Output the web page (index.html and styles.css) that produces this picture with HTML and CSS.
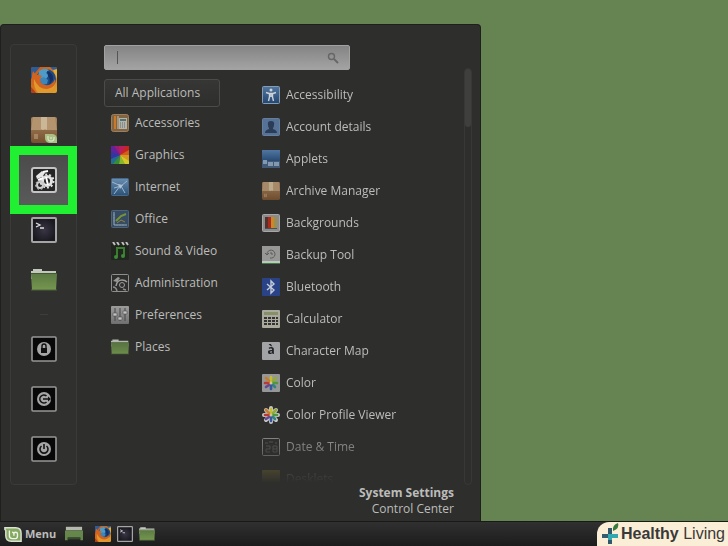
FILE: index.html
```html
<!DOCTYPE html>
<html lang="en">
<head>
<meta charset="utf-8">
<title>Menu</title>
<meta name="viewport" content="width=device-width, initial-scale=1">
<link rel="stylesheet" href="styles.css">
</head>
<body>
<svg class="sprite" aria-hidden="true">
  <defs>
    <linearGradient id="g-grey" x2="0" y2="1"><stop stop-color="#a9a9a9"/><stop offset="1" stop-color="#777"/></linearGradient>
    <linearGradient id="g-blue" x2="0" y2="1"><stop stop-color="#557fae"/><stop offset="1" stop-color="#244a78"/></linearGradient>
    <linearGradient id="g-sky" x2="0" y2="1"><stop stop-color="#6f98bf"/><stop offset="1" stop-color="#2c5580"/></linearGradient>
    <linearGradient id="g-green" x2="0" y2="1"><stop stop-color="#5c7b44"/><stop offset="1" stop-color="#75974f"/></linearGradient>
    <linearGradient id="g-box" x2="0" y2="1"><stop stop-color="#a98660"/><stop offset="1" stop-color="#76502f"/></linearGradient>
    <linearGradient id="g-fox" x2="1" y2="1"><stop stop-color="#c8541b"/><stop offset=".6" stop-color="#d9781c"/><stop offset="1" stop-color="#e0a531"/></linearGradient>
    <radialGradient id="g-term"><stop stop-color="#3a3645"/><stop offset="1" stop-color="#1a1920"/></radialGradient>
  </defs>
  <symbol id="firefox" viewBox="0 0 26 26">
    <rect width="26" height="26" rx="2" fill="url(#g-fox)"/>
    <path d="M0 2Q0 0 2 0h7L4 6 0 12zM19 0h5q2 0 2 2v5z" fill="#2d5c96"/>
    <path d="M22 3l4-1v10z" fill="#e3b13a"/>
    <circle cx="15" cy="12" r="10" fill="#1d4c86"/>
    <path d="M8 4q5-4 10-1l-3 3 3 2-3 4-5 1-3-3z" fill="#4e9bc8"/>
    <path d="M8 12l5-2 4 3-1 4-5 1z" fill="#3c86bb"/>
    <path d="M16 4q7 2 6 9l-4 5q2-6-1-9z" fill="#132f63"/>
    <path d="M2 4l3 4q3-1 6 1l-2 3 1 4q5 4 10 1 3-2 4-5 1 7-5 11-9 4-15-3-5-7-2-16z" fill="#d36420"/>
    <path d="M3 12q4 10 13 10 6-1 8-5-1 8-8 9H7Q2 20 3 12z" fill="#e39a2d"/>
    <path d="M0 20q3 3 5 6H2q-2 0-2-2z" fill="#b33d19"/>
  </symbol>
  <symbol id="box" viewBox="0 0 26 26">
    <rect width="26" height="26" rx="2" fill="url(#g-box)"/>
    <path d="M2 0h22l2 13H0z" fill="#b3946f"/>
    <path d="M0 13h26v1H0z" fill="#8c6b49"/>
    <path d="M10 0h6v13l-2-1-2 1-2-1z" fill="#cbb798"/>
    <path d="M4 17v5M6 17v5" stroke="#c4ab87"/>
  </symbol>
  <symbol id="package" viewBox="0 0 26 26">
    <use href="#box"/>
    <path d="M14 17h8q4 1 4 5v4h-8q-4-1-4-5z" fill="#a9bf83"/>
    <path d="M17 19v3q0 2 2 2h2q2 0 2-2v-2M20 20v2" fill="none" stroke="#e6efd8"/>
  </symbol>
  <symbol id="gears" viewBox="0 0 26 26">
    <rect x="1" y="1" width="24" height="24" rx="2" fill="#252525" stroke="#c4c4c4" stroke-width="2"/>
    <path d="M5 9l6-5 3 2-3 4-5 2z" fill="#e6e6e6"/>
    <circle cx="16" cy="14" r="4.500" fill="none" stroke="#e2e2e2" stroke-width="3"/>
    <circle cx="16" cy="14" r="6.500" fill="none" stroke="#e2e2e2" stroke-width="2" stroke-dasharray="2 2"/>
    <circle cx="9" cy="18" r="3" fill="none" stroke="#ccc" stroke-width="2"/>
    <circle cx="9" cy="18" r="4.500" fill="none" stroke="#bbb" stroke-dasharray="2 2"/>
    <path d="M12 5l5-1M7 13l5-2M15 10l2 8" stroke="#fff" stroke-width="2"/>
  </symbol>
  <symbol id="terminal" viewBox="0 0 26 26">
    <rect x="1" y="1" width="24" height="24" rx="1" fill="url(#g-term)" stroke="#a5a5a5" stroke-width="2"/>
    <path d="M5 6l4 2-4 2M9 11h4" fill="none" stroke="#e0e0e0" stroke-width="1.3"/>
  </symbol>
  <symbol id="folder" viewBox="0 0 26 22">
    <path d="M0 2h2V0h9v2h14v8H0z" fill="#c3c8be"/>
    <path d="M0 4h26v1H0z" fill="#435a33"/>
    <path d="M0 5h26l-1 16H1z" fill="url(#g-green)"/>
    <path d="M0 21h26" stroke="#4c6637"/>
  </symbol>
  <symbol id="session" viewBox="0 0 26 26">
    <rect x="1" y="1" width="24" height="24" rx="1" fill="#080808" stroke="#979797" stroke-width="1.6"/>
    <circle cx="13" cy="13" r="7" fill="#a6a6a6"/>
  </symbol>
  <symbol id="lock" viewBox="0 0 26 26"><use href="#session"/><path d="M10 12h6v5h-6z" fill="#111"/><path d="M11 12v-2q0-2 2-2t2 2v2" fill="none" stroke="#111" stroke-width="1.4"/></symbol>
  <symbol id="logout" viewBox="0 0 26 26"><use href="#session"/><path d="M15.500 10a4 4 0 1 0 0 6M12 13h6" fill="none" stroke="#151515" stroke-width="1.6"/><path d="M17 10.500l3 2.500-3 2.500z" fill="#151515"/></symbol>
  <symbol id="power" viewBox="0 0 26 26"><use href="#session"/><path d="M10.500 10a4 4 0 1 0 5 0M13 8v5" fill="none" stroke="#151515" stroke-width="1.6"/></symbol>

  <symbol id="accessories" viewBox="0 0 18 18">
    <rect x=".5" y=".5" width="17" height="17" rx="2" fill="#8d6a45" stroke="#a98961"/>
    <path d="M4 2v13" stroke="#d98326" stroke-width="2"/><path d="M7 2v13" stroke="#ddd3bf"/>
    <rect x="8" y="4" width="8" height="11" fill="#bfc3bd"/><path d="M9 5h6v2H9z" fill="#5b7a72"/>
    <path d="M9 9h6M9 11h6M9 13h6" stroke="#6c6f6b" stroke-dasharray="1 1"/>
  </symbol>
  <symbol id="graphics" viewBox="0 0 18 18">
    <rect width="18" height="18" rx="1" fill="#a51c7c"/>
    <path d="M9 9L8 0h8z" fill="#c91f61"/><path d="M9 9l6-9h3v5z" fill="#d8251e"/><path d="M9 9l9-5v5z" fill="#e5641a"/>
    <path d="M9 9h9v7z" fill="#eaa21c"/><path d="M9 9l9 6v3h-5z" fill="#e6d928"/><path d="M9 9l5 9H8z" fill="#8fc72b"/>
    <path d="M9 9l-1 9H1z" fill="#35983a"/><path d="M9 9l-7 9H0v-6z" fill="#23729c"/><path d="M9 9l-9 4V5z" fill="#3238ae"/><path d="M9 9L0 6V0h3z" fill="#6522a8"/>
  </symbol>
  <symbol id="internet" viewBox="0 0 18 18">
    <rect x=".5" y=".5" width="17" height="17" rx="1" fill="url(#g-sky)" stroke="#486f96"/>
    <path d="M1 4l9 4 6-5M9 8l-6 8M10 8l4 7M3 10l7-2" fill="none" stroke="#a9c7df"/>
    <path d="M7 6l5 1-3 4z" fill="#bcd4e7"/>
  </symbol>
  <symbol id="office" viewBox="0 0 18 18">
    <rect x=".5" y=".5" width="17" height="17" rx="1" fill="#36506b" stroke="#506a83"/>
    <path d="M3 2v13h13" fill="none" stroke="#a8bac9"/><path d="M2 5h2M2 8h2M2 11h2M6 14v2M9 14v2M12 14v2" stroke="#8196a8"/>
    <path d="M5 11l5-5 5-2" fill="none" stroke="#7f9e37" stroke-width="2"/><path d="M6 13l4-3 4 2" fill="none" stroke="#a08c35"/>
  </symbol>
  <symbol id="video" viewBox="0 0 18 18">
    <rect y="1" width="18" height="17" rx="1" fill="#1f261c"/>
    <path d="M2 0l2 3M6 0l2 3M11 0l2 3M15 0l2 3" stroke="#d0d0d0" stroke-width="2"/>
    <path d="M6 15V6h7v8" fill="none" stroke="#3d8631" stroke-width="2"/><circle cx="5" cy="15" r="2" fill="#42933a"/><circle cx="12" cy="14" r="2" fill="#42933a"/>
  </symbol>
  <symbol id="admin" viewBox="0 0 18 18">
    <rect x=".5" y=".5" width="17" height="17" rx="1" fill="#2e2e2e" stroke="#999"/>
    <path d="M2 7l5-4 2 1-3 4z" fill="#a5a5a5"/>
    <circle cx="11" cy="11" r="2.500" fill="none" stroke="#aaa"/><path d="M5 12q1-6 6-6 3 0 5 2" fill="none" stroke="#aaa" stroke-width="1.500"/>
    <path d="M2 13q3 0 4 4M12 15l3 1" fill="none" stroke="#999" stroke-width="1.500"/>
  </symbol>
  <symbol id="prefs" viewBox="0 0 18 18">
    <rect width="18" height="18" rx="1" fill="url(#g-grey)"/>
    <path d="M4 2v13M9 2v13M14 2v13" stroke="#4b4b4b"/><path d="M2 7h4v3H2zM7 11h4v3H7zM12 5h4v3h-4z" fill="#d3d3d3" stroke="#565656" stroke-width=".6"/>
  </symbol>
  <symbol id="access" viewBox="0 0 18 18">
    <rect x=".5" y=".5" width="17" height="17" rx="1" fill="url(#g-blue)" stroke="#8fa9c3"/>
    <circle cx="9" cy="4" r="1.500" fill="#e1e6eb"/><path d="M4 6.500l3 1h4l3-1M9 7v4M7.500 8v3l-1 4M10.500 8v3l1 4" fill="none" stroke="#e1e6eb" stroke-width="1.400"/>
  </symbol>
  <symbol id="account" viewBox="0 0 18 18">
    <rect x=".5" y=".5" width="17" height="17" rx="1" fill="#5d7aa3" stroke="#6c87ac"/>
    <path d="M9 3q4 0 3 4 0 2-1 3v1q4 1 4 4H3q0-3 4-4v-1q-1-1-1-3-1-4 3-4z" fill="#2c3f5c"/>
  </symbol>
  <symbol id="applets" viewBox="0 0 18 18">
    <path d="M0 0h18v12H0z" fill="url(#g-blue)"/><path d="M0 11h18v7H0z" fill="#46607f"/>
    <path d="M1 10h4v4H1zM6 12h5v4H6zM12 12h5v4h-5z" fill="#8da3bd"/>
  </symbol>
  <symbol id="backgrounds" viewBox="0 0 18 18">
    <rect x=".5" y=".5" width="17" height="17" rx="1" fill="#969696" stroke="#b5b5b5"/>
    <path d="M3 3h3v11H3z" fill="#5b342b"/><path d="M6 3h3v11H6z" fill="#b72c20"/><path d="M9 3h3v11H9z" fill="#da9529"/><path d="M12 3h3v11h-3z" fill="#a8995a"/><path d="M3 14h12v1H3z" fill="#555"/>
  </symbol>
  <symbol id="backup" viewBox="0 0 18 18">
    <rect width="18" height="18" fill="#a3a5a2"/><path d="M0 15h18v2H0z" fill="#d2d5d0"/><path d="M0 17.500h18" stroke="#3e8a46"/>
    <path d="M5 8a4 4 0 1 1 3 4M3 7l2 2 2-2M9 6v2h2" fill="none" stroke="#606360"/>
  </symbol>
  <symbol id="bluetooth" viewBox="0 0 18 18">
    <rect width="18" height="18" rx="1" fill="#2b4691"/><path d="M5 6l7 6-3 3V3l3 3-7 6" fill="none" stroke="#d6deed" stroke-width="1.400"/>
  </symbol>
  <symbol id="calculator" viewBox="0 0 18 18">
    <rect width="18" height="18" rx="1" fill="#bab7a8"/><path d="M2 2h14v3H2z" fill="#8f9b72"/>
    <path d="M2 8h14M2 11h14M2 14h14" stroke="#333" stroke-width="2" stroke-dasharray="3 1"/>
  </symbol>
  <symbol id="flower" viewBox="0 0 18 18">
    <g stroke-width="2.600" stroke-linecap="round"><path d="M9 7V3" stroke="#d5cf35"/><path d="M11 7l3-3" stroke="#a0bb35"/><path d="M11 9h4" stroke="#55a53c"/><path d="M11 11l2 2" stroke="#388c8c"/><path d="M9 11v4" stroke="#3a5cac"/><path d="M7 11l-3 2" stroke="#6e4b9e"/><path d="M7 9H3" stroke="#c53d37"/><path d="M7 7L4 4" stroke="#db8433"/></g><circle cx="9" cy="9" r="1.500" fill="#e1d9a8"/>
  </symbol>
  <symbol id="color" viewBox="0 0 18 18"><rect width="18" height="18" rx="1" fill="#a2a3a4"/><use href="#flower"/></symbol>
  <symbol id="profile" viewBox="0 0 18 18"><path d="M9 2v14M2 9h14M4 4l10 10M14 4L4 14" stroke="#d9d9d9" stroke-width="4" stroke-linecap="round"/><circle cx="9" cy="9" r="6" fill="#d9d9d9"/><use href="#flower"/></symbol>
  <symbol id="date" viewBox="0 0 18 18">
    <rect x=".5" y=".5" width="17" height="17" rx="1" fill="#303030" stroke="#b0b0b0"/><path d="M3 5h3M7 4h4M13 5h2M4 8h4v3H4v3h4M11 8h4v6h-4zM11 11h4" fill="none" stroke="#6a6a6a"/>
  </symbol>
  <symbol id="desklets" viewBox="0 0 18 18"><rect width="18" height="18" rx="1" fill="#b9a444"/></symbol>
  <symbol id="mint" viewBox="0 0 20 17">
    <path d="M1 1h12q6 0 6 6v9H8q-6 0-6-6V4L1 3z" fill="#86aa62" stroke="#dbe3d2" stroke-width="1.600"/>
    <path d="M6 4v6q0 3 3 3h4q2 0 2-3V8q0-2-2-2t-2 2v2M11 8q0-2-2-2" fill="none" stroke="#f0f4ec" stroke-width="1.500"/>
  </symbol>
  <symbol id="desktop" viewBox="0 0 20 16"><path d="M1 0h18v4H1z" fill="#c3c8bd"/><path d="M0 4h20v11h-3v-3H3v3H0z" fill="#6d9150"/><path d="M3 12h14v2H3z" fill="#3b4d30"/></symbol>
  <symbol id="search-icon" viewBox="0 0 12 12"><circle cx="4.500" cy="4.500" r="3" fill="none" stroke="#666" stroke-width="1.400"/><path d="M7 7l4 4" stroke="#666" stroke-width="1.800"/></symbol>
  <symbol id="cross" viewBox="0 0 20 22"><path d="M10 5v16" stroke="#32586b" stroke-width="4"/><path d="M2 13h16" stroke="#31a8b0" stroke-width="4"/><path d="M2 13h6" stroke="#345b6e" stroke-width="4"/><path d="M10 11v6" stroke="#31a8b0" stroke-width="4"/><path d="M13 8q-1-6 5-8 2 5-5 8z" fill="#377b3a"/></symbol>
</svg>

<div class="desktop">
  <main class="menu">
    <div class="menu-body">
      <nav class="favorites" aria-label="Favorites">
        <button class="favorite" aria-label="Firefox"><svg class="icon-lg"><use href="#firefox"/></svg></button>
        <button class="favorite" aria-label="Software Manager"><svg class="icon-lg"><use href="#package"/></svg></button>
        <button class="favorite favorite-active" aria-label="System Settings"><svg class="icon-lg"><use href="#gears"/></svg></button>
        <button class="favorite" aria-label="Terminal"><svg class="icon-lg"><use href="#terminal"/></svg></button>
        <button class="favorite" aria-label="Files"><svg class="icon-lg"><use href="#folder"/></svg></button>
        <div class="divider"></div>
        <button class="favorite" aria-label="Lock screen"><svg class="icon-lg"><use href="#lock"/></svg></button>
        <button class="favorite" aria-label="Logout"><svg class="icon-lg"><use href="#logout"/></svg></button>
        <button class="favorite" aria-label="Quit"><svg class="icon-lg"><use href="#power"/></svg></button>
      </nav>
      <div class="browser">
        <label class="search">
          <span class="caret"></span>
          <input class="search-input" type="text" aria-label="Search applications">
          <svg class="search-icon"><use href="#search-icon"/></svg>
        </label>
        <div class="lists">
          <nav class="categories" aria-label="Categories">
            <button class="category-all">All Applications</button>
            <button class="entry"><svg class="icon"><use href="#accessories"/></svg>Accessories</button>
            <button class="entry"><svg class="icon"><use href="#graphics"/></svg>Graphics</button>
            <button class="entry"><svg class="icon"><use href="#internet"/></svg>Internet</button>
            <button class="entry"><svg class="icon"><use href="#office"/></svg>Office</button>
            <button class="entry"><svg class="icon"><use href="#video"/></svg>Sound &amp; Video</button>
            <button class="entry"><svg class="icon"><use href="#admin"/></svg>Administration</button>
            <button class="entry"><svg class="icon"><use href="#prefs"/></svg>Preferences</button>
            <button class="entry"><svg class="icon"><use href="#folder"/></svg>Places</button>
          </nav>
          <div class="apps">
            <button class="entry"><svg class="icon"><use href="#access"/></svg>Accessibility</button>
            <button class="entry"><svg class="icon"><use href="#account"/></svg>Account details</button>
            <button class="entry"><svg class="icon"><use href="#applets"/></svg>Applets</button>
            <button class="entry"><svg class="icon"><use href="#box"/></svg>Archive Manager</button>
            <button class="entry"><svg class="icon"><use href="#backgrounds"/></svg>Backgrounds</button>
            <button class="entry"><svg class="icon"><use href="#backup"/></svg>Backup Tool</button>
            <button class="entry"><svg class="icon"><use href="#bluetooth"/></svg>Bluetooth</button>
            <button class="entry"><svg class="icon"><use href="#calculator"/></svg>Calculator</button>
            <button class="entry"><span class="icon glyph">à</span>Character Map</button>
            <button class="entry"><svg class="icon"><use href="#color"/></svg>Color</button>
            <button class="entry"><svg class="icon"><use href="#profile"/></svg>Color Profile Viewer</button>
            <button class="entry"><svg class="icon"><use href="#date"/></svg>Date &amp; Time</button>
            <button class="entry"><svg class="icon"><use href="#desklets"/></svg>Desklets</button>
          </div>
        </div>
      </div>
      <div class="scrollbar"><div class="scroll-thumb"></div></div>
    </div>
    <div class="selected">
      <strong>System Settings</strong>
      <span>Control Center</span>
    </div>
  </main>
  <footer class="panel">
    <button class="menu-button"><svg class="mint-icon"><use href="#mint"/></svg>Menu</button>
    <button class="launcher launcher-desktop" aria-label="Show desktop"><svg class="icon"><use href="#desktop"/></svg></button>
    <button class="launcher" aria-label="Firefox"><svg class="launch-icon"><use href="#firefox"/></svg></button>
    <button class="launcher" aria-label="Terminal"><svg class="launch-icon"><use href="#terminal"/></svg></button>
    <button class="launcher" aria-label="Files"><svg class="launch-icon"><use href="#folder"/></svg></button>
  </footer>
  <div class="brand"><svg class="brand-icon"><use href="#cross"/></svg><span><b>Healthy</b> Living</span></div>
</div>
</body>
</html>
```
FILE: styles.css
```css
* { box-sizing: border-box; }

body {
  margin: 0;
  background: #668452;
  color: #bcbcba;
  font: 12px/16px "Open Sans", "Noto Sans", sans-serif;
}

button {
  margin: 0;
  padding: 0;
  border: 0;
  background: none;
  color: inherit;
  font: inherit;
  text-align: left;
}

svg { display: block; flex: none; }
.sprite { position: absolute; width: 0; height: 0; }
.icon { width: 18px; height: 18px; opacity: 0.9; }
.icon-lg { width: 26px; height: 26px; }

.glyph {
  flex: none;
  border-radius: 1px;
  background: #b0b1b4;
  color: #202124;
  font-weight: bold;
  text-align: center;
}

.desktop {
  position: relative;
  display: flex;
  flex-direction: column;
  height: 100vh;
  padding-top: 24px;
  overflow: hidden;
}

.menu {
  display: flex;
  flex: 1;
  flex-direction: column;
  width: 481px;
  max-width: 100%;
  min-height: 0;
  padding: 19px 8px 4px 9px;
  border: 1px solid #1f201d;
  border-bottom: 0;
  border-radius: 4px 4px 0 0;
  background: #2e2e2c;
}

.menu-body { display: flex; flex: 1; min-height: 0; }

.favorites {
  flex: none;
  width: 67px;
  padding-top: 10px;
  border: 1px solid #3a3a38;
  border-radius: 4px;
  background: #30302e;
}

.favorite {
  position: relative;
  display: flex;
  align-items: center;
  justify-content: center;
  width: 100%;
  height: 50px;
}

.favorite-active::before {
  content: "";
  position: absolute;
  inset: -9px -1px;
  border: 9px solid #20ef32;
  background: linear-gradient(#4b4b4b, #5a5a5a);
}

.favorite-active svg { position: relative; }

.divider { width: 8px; height: 1px; margin: 9px auto; background: #3d3d3b; }

.browser {
  display: flex;
  flex: 1;
  flex-direction: column;
  min-width: 0;
  margin-left: 27px;
}

.search {
  display: flex;
  flex: none;
  align-items: center;
  width: 246px;
  max-width: 100%;
  height: 25px;
  margin-top: 1px;
  padding: 0 10px 0 12px;
  border: 1px solid #a2a2a2;
  border-radius: 2px;
  background: linear-gradient(#848484, #a3a3a3);
}

.caret { width: 1px; height: 13px; background: #555; }

.search-input {
  flex: 1;
  min-width: 0;
  border: 0;
  outline: 0;
  background: none;
  color: #222;
  font: inherit;
}

.search-icon { width: 12px; height: 12px; }

.lists { display: flex; flex: 1; min-height: 0; margin-top: 9px; }
.categories { flex: none; width: 116px; }

.category-all {
  display: block;
  width: 100%;
  height: 28px;
  padding: 0 10px;
  border: 1px solid #4b4b49;
  border-radius: 3px;
  background: linear-gradient(#363634, #2e2e2c);
}

.entry {
  display: flex;
  align-items: center;
  gap: 6px;
  width: 100%;
  height: 32px;
  padding-left: 7px;
  white-space: nowrap;
}

.apps {
  flex: 1;
  min-width: 0;
  margin-left: 35px;
  overflow: hidden;
  -webkit-mask-image: linear-gradient(#000 calc(100% - 64px), transparent calc(100% - 2px));
  mask-image: linear-gradient(#000 calc(100% - 64px), transparent calc(100% - 2px));
}

.scrollbar {
  flex: none;
  width: 8px;
  margin-top: 24px;
  border: 1px solid #383836;
  border-radius: 4px;
}

.scroll-thumb { height: 58px; border-radius: 3px; background: #3f403e; }

.selected {
  display: flex;
  flex-direction: column;
  align-items: flex-end;
  padding-right: 18px;
}

.panel {
  display: flex;
  flex: none;
  align-items: center;
  height: 25px;
  padding-left: 4px;
  border-top: 1px solid #191917;
  background: linear-gradient(#303030, #1c1c1c);
}

.menu-button {
  display: flex;
  align-items: center;
  gap: 3px;
  font-size: 11px;
  font-weight: bold;
}

.mint-icon { width: 18px; height: 17px; }
.launch-icon { width: 16px; height: 16px; }
.launcher { margin-left: 6px; }
.launcher-desktop { margin: 0 6px 0 9px; }

.brand {
  position: absolute;
  right: 0;
  bottom: 0;
  display: flex;
  align-items: center;
  gap: 1px;
  height: 24px;
  padding: 0 3px;
  border-radius: 12px 0 0 0;
  background: #fbeed6;
  color: #393939;
  font: 16px/22px "Liberation Sans", sans-serif;
}

.brand-icon { width: 20px; height: 22px; }
```
